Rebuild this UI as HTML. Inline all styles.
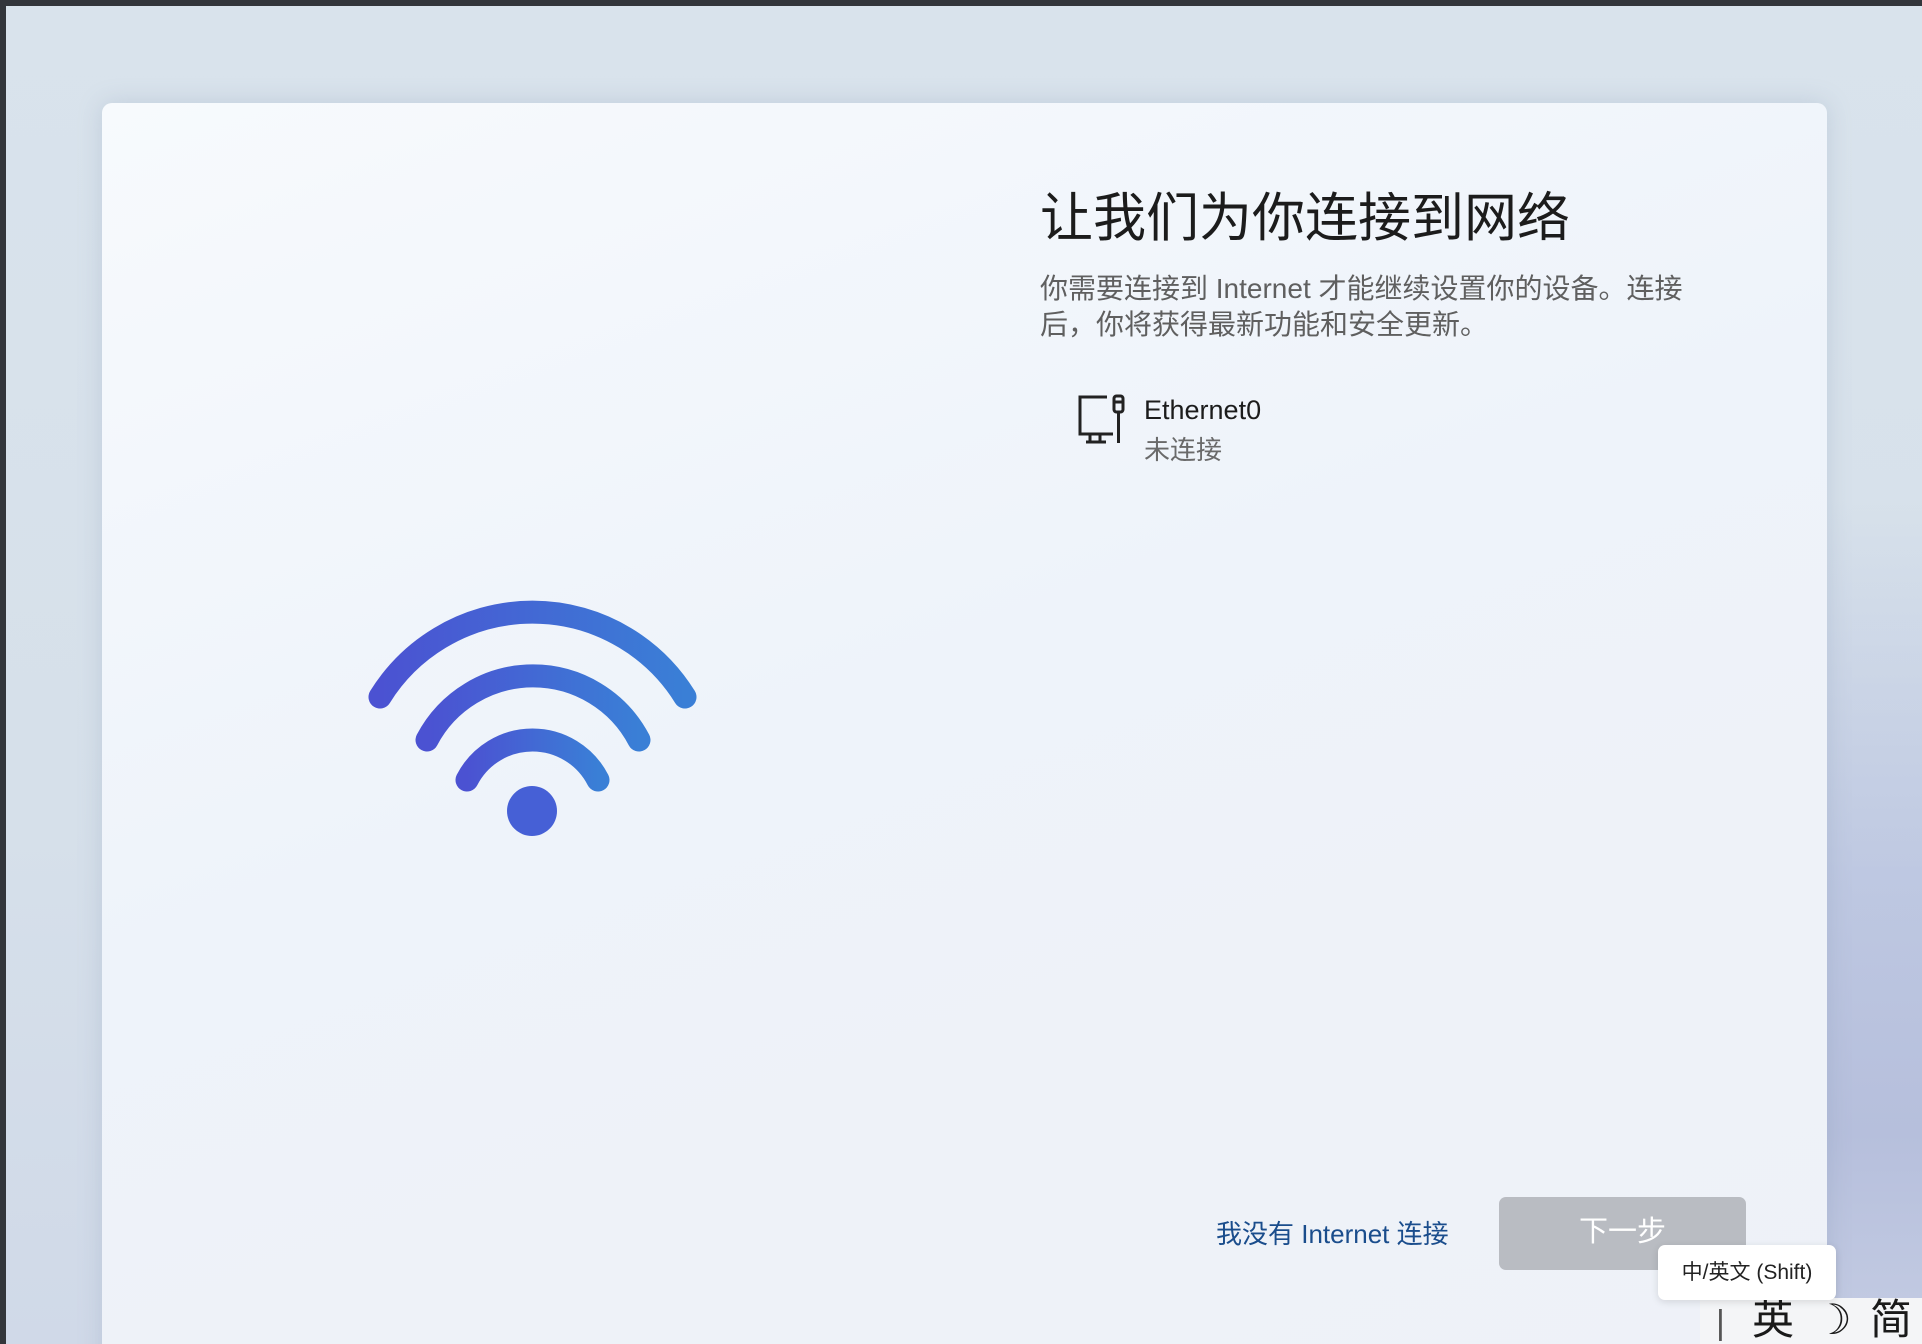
<!DOCTYPE html>
<html><head><meta charset="utf-8"><style>
*{margin:0;padding:0;box-sizing:border-box}
html,body{width:1922px;height:1344px;overflow:hidden}
body{position:relative;background:#33363b;font-family:"Liberation Sans","Noto Sans CJK SC",sans-serif}
#bg{position:absolute;left:6px;top:6px;right:0;bottom:0;background:linear-gradient(180deg,#d9e3ec 0%,#d6e0ea 60%,#d0d9e8 100%)}
#rightglow{position:absolute;left:1827px;top:500px;width:95px;height:844px;background:linear-gradient(180deg,rgba(180,190,220,0) 0%,rgba(180,190,222,.7) 45%,#b6bfdc 75%,#c4cce3 100%)}
#card{position:absolute;left:102px;top:103px;width:1725px;height:1300px;border-radius:10px;background:linear-gradient(160deg,#f7fafd 0%,#eef3fa 45%,#eef2f8 70%,#eef1f8 100%);box-shadow:0 0 24px rgba(120,140,170,.25)}
.t{position:absolute;white-space:nowrap}
#title{left:1040px;top:176px;font-size:53px;color:#1c1c1c}
#desc{left:1040px;top:271px;font-size:28px;line-height:36px;color:#5f5f5f}
#eth{left:1144px;top:395px;font-size:27px;color:#1c1c1c}
#st{left:1144px;top:430px;font-size:26px;color:#6a6a6a}
#link{left:1216px;top:1214px;font-size:26px;color:#1a4d8c}
#btn{position:absolute;left:1499px;top:1197px;width:247px;height:73px;border-radius:7px;background:#b9bcc2;color:#fff;font-size:29px;text-align:center;line-height:70px}
#tip{position:absolute;left:1658px;top:1245px;width:178px;height:55px;border-radius:7px;background:#fff;box-shadow:0 2px 8px rgba(0,0,0,.12);font-size:21px;color:#222;line-height:55px;text-align:center}
#ime{position:absolute;left:1700px;top:1298px;width:222px;height:46px;background:#f4f5f7}
#imet{left:1716px;top:1296px;font-size:42px;color:#1a1a1a;line-height:48px}
#imet span{display:inline-block}
</style></head><body>
<div id="bg"></div>
<div id="rightglow"></div>
<div id="card"></div>
<svg style="position:absolute;left:0;top:0" width="1922" height="1344">
<defs><linearGradient id="g" x1="0" x2="1"><stop offset="0" stop-color="#4b52d2"/><stop offset="1" stop-color="#3a7fd6"/></linearGradient></defs>
<g fill="none" stroke="url(#g)" stroke-width="23" stroke-linecap="round">
<path d="M380 697 A179.5 179.5 0 0 1 685 697"/>
<path d="M427 740 A119.7 119.7 0 0 1 639 740"/>
<path d="M467 780 A73.6 73.6 0 0 1 598 780"/>
</g>
<circle cx="532" cy="811" r="25" fill="#4660d6"/>
<g fill="none" stroke="#222" stroke-width="3">
<path d="M1107 397 H1080 V434 H1113"/>
<path d="M1090 434 V442 M1100 434 V442 M1086 442 H1106"/>
<rect x="1114" y="396" width="9" height="16" rx="2.5"/>
<path d="M1114 402 H1123 M1118.5 412 V443"/>
</g>
</svg>
<div class="t" id="title">让我们为你连接到网络</div>
<div class="t" id="desc">你需要连接到 Internet 才能继续设置你的设备。连接<br>后，你将获得最新功能和安全更新。</div>
<div class="t" id="eth">Ethernet0</div>
<div class="t" id="st">未连接</div>
<div class="t" id="link">我没有 Internet 连接</div>
<div id="btn">下一步</div>
<div id="ime"></div>
<div class="t" id="imet"><span style="color:#555;font-size:34px;width:36px">|</span><span style="width:62px">英</span><span style="width:56px">☽</span><span>简</span></div>
<div id="tip">中/英文 (Shift)</div>
</body></html>
